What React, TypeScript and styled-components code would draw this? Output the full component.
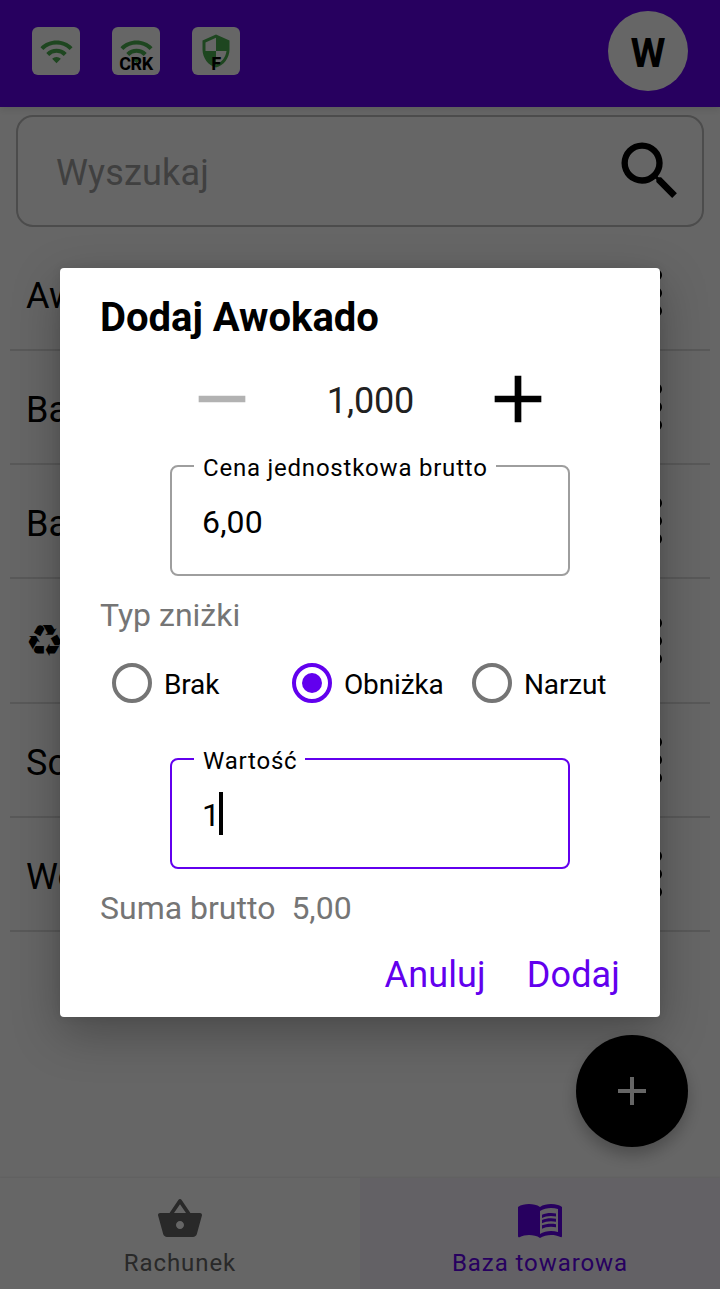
import React from "react";
import styled, { createGlobalStyle, css } from "styled-components";
import {
  MdAdd,
  MdMenuBook,
  MdMoreVert,
  MdRemove,
  MdSearch,
  MdSecurity,
  MdShoppingBasket,
  MdWifi,
} from "react-icons/md";

const PURPLE = "#6200ee";

const GlobalStyle = createGlobalStyle`
  * { box-sizing: border-box; }
  body {
    margin: 0;
    font-family: Roboto, "Liberation Sans", sans-serif;
    color: #000;
    background: #fff;
  }
  svg { display: block; flex-shrink: 0; }
`;

const Screen = styled.div`
  position: relative;
  display: flex;
  flex-direction: column;
  width: 720px;
  height: 1289px;
  overflow: hidden;
  background: #fff;
`;

const TopBar = styled.header`
  display: flex;
  align-items: center;
  gap: 32px;
  height: 107px;
  padding: 0 32px 5px;
  background: ${PURPLE};
  box-shadow: 0 2px 8px rgba(0, 0, 0, 0.12);
`;

const StatusTile = styled.div`
  position: relative;
  display: flex;
  align-items: center;
  justify-content: center;
  width: 48px;
  height: 48px;
  border-radius: 6px;
  background: #fff;
  color: #4caf50;
`;

const StatusTag = styled.span`
  position: absolute;
  left: 0;
  right: 0;
  bottom: 0;
  text-align: center;
  font-size: 18px;
  line-height: 22px;
  font-weight: 700;
  letter-spacing: -0.4px;
  color: #000;
`;

const Avatar = styled.div`
  display: flex;
  align-items: center;
  justify-content: center;
  width: 80px;
  height: 80px;
  margin-left: auto;
  border-radius: 50%;
  background: #fff;
  font-size: 40px;
  line-height: 48px;
  padding-top: 5px;
  font-weight: 700;
`;

const SearchBox = styled.div`
  display: flex;
  align-items: center;
  justify-content: space-between;
  height: 112px;
  margin: 8px 16px 10px;
  padding: 0 14px 0 38px;
  border: 2px solid #bdbdbd;
  border-radius: 17px;
`;

const Placeholder = styled.span`
  padding-top: 3px;
  font-size: 36px;
  line-height: 44px;
  letter-spacing: 0.15px;
  color: #a0a0a0;
`;

const ProductList = styled.ul`
  flex: 1;
  margin: 0;
  padding: 0 10px;
  list-style: none;
`;

const ProductRow = styled.li<{ $tall?: boolean }>`
  display: flex;
  align-items: center;
  justify-content: space-between;
  height: ${(p) => (p.$tall ? 125 : 114)}px;
  padding: 0 18px 0 16px;
  border-bottom: 2px solid #dedede;
  font-size: 36px;
  line-height: 42px;
`;

const ProductName = styled.span`
  padding-top: 6px;
`;

const RecycleMark = styled.span`
  display: block;
  margin: -6px 0 0 -1px;
  font-family: "DejaVu Sans", sans-serif;
  font-size: 44px;
  line-height: 42px;
`;

const BottomNav = styled.nav`
  display: flex;
  height: 111px;
  box-shadow: 0 -1px 2px rgba(0, 0, 0, 0.08);
`;

const NavTab = styled.div<{ $active?: boolean }>`
  flex: 1;
  display: flex;
  flex-direction: column;
  align-items: center;
  padding-top: 17px;
  font-size: 24px;
  line-height: 28px;
  letter-spacing: 0.93px;
  color: ${(p) => (p.$active ? PURPLE : "#666")};
  background: ${(p) => (p.$active ? "#f7f2fd" : "#fff")};
  gap: 6px;
`;

const Fab = styled.div`
  position: absolute;
  right: 32px;
  bottom: 142px;
  display: flex;
  align-items: center;
  justify-content: center;
  width: 112px;
  height: 112px;
  border-radius: 50%;
  background: #000;
  color: #fff;
  box-shadow: 0 8px 16px rgba(0, 0, 0, 0.26);
`;

const Scrim = styled.div`
  position: absolute;
  inset: 0;
  display: flex;
  justify-content: center;
  align-items: flex-start;
  padding-top: 268px;
  background: rgba(0, 0, 0, 0.6);
`;

const Dialog = styled.section`
  display: flex;
  flex-direction: column;
  width: 600px;
  height: 749px;
  padding: 0 40px;
  border-radius: 4px;
  background: #fff;
  box-shadow: 0 16px 48px rgba(0, 0, 0, 0.28), 0 0 10px rgba(0, 0, 0, 0.08);
`;

const Title = styled.h1`
  margin: 26px 0 0;
  font-size: 40px;
  line-height: 48px;
  font-weight: 700;
`;

const Stepper = styled.div`
  display: flex;
  align-items: center;
  justify-content: space-between;
  height: 80px;
  margin: 17px 62px 0 82px;
`;

const StepButton = styled.span<{ $disabled?: boolean }>`
  color: ${(p) => (p.$disabled ? "#b2b2b2" : "#000")};
`;

const Quantity = styled.span`
  padding: 3px 0 0 1px;
  font-size: 36px;
  line-height: 42px;
  letter-spacing: -0.15px;
  color: #212121;
`;

const Field = styled.fieldset<{ $focused?: boolean }>`
  width: 400px;
  height: 126px;
  margin: 0 0 0 70px;
  padding: 0 30px;
  border: 2px solid ${(p) => (p.$focused ? PURPLE : "#9e9e9e")};
  border-radius: 8px;
`;

const FieldLabel = styled.legend`
  margin-left: -8px;
  padding: 4px 8px 0 9px;
  font-size: 24px;
  line-height: 28px;
  letter-spacing: 0.78px;
`;

const FieldValue = styled.div`
  display: flex;
  align-items: center;
  height: 56px;
  margin-top: 12px;
  font-size: 32px;
  letter-spacing: 0.15px;
`;

const Caret = styled.span`
  width: 4px;
  height: 43px;
  margin: 0 0 4px -1px;
  background: #000;
`;

const Caption = styled.p`
  margin: 0;
  font-size: 32px;
  line-height: 38px;
  color: #757575;
`;

const RadioRow = styled.div`
  display: grid;
  grid-template-columns: repeat(3, 180px);
  height: 40px;
  padding-left: 12px;
`;

const RadioOption = styled.label`
  display: flex;
  align-items: center;
  gap: 12px;
  font-size: 28px;
  line-height: 32px;
`;

const RadioMark = styled.span<{ $checked?: boolean }>`
  width: 40px;
  height: 40px;
  border: 4px solid ${(p) => (p.$checked ? PURPLE : "#757575")};
  border-radius: 50%;
  ${(p) =>
    p.$checked &&
    css`
      padding: 6px;
      background: ${PURPLE} content-box;
    `}
`;

const RadioText = styled.span`
  padding-top: 3px;
  letter-spacing: -0.15px;
`;

const Actions = styled.div`
  display: flex;
  justify-content: flex-end;
  gap: 41px;
  margin-top: 27px;
`;

const ActionButton = styled.button`
  padding: 0;
  border: 0;
  background: none;
  font: 400 36px/42px Roboto, sans-serif;
  letter-spacing: 0.12px;
  color: ${PURPLE};
`;

const PriceArea = styled.div`
  margin-top: 11px;
`;
const TypeArea = styled.div`
  margin-top: 20px;
`;
const RadioArea = styled.div`
  margin-top: 29px;
`;
const ValueArea = styled.div`
  margin-top: 40px;
`;
const SumArea = styled.div`
  display: flex;
  gap: 16px;
  margin-top: 20px;
`;

const products = [
  { name: "Awokado" },
  { name: "Banany" },
  { name: "Batony" },
  { name: "♻", recycled: true },
  { name: "Sok" },
  { name: "Woda" },
];

const discountTypes = ["Brak", "Obniżka", "Narzut"];

export default function App() {
  return (
    <>
      <GlobalStyle />
      <Screen>
        <TopBar>
          <StatusTile>
            <MdWifi size={35} />
          </StatusTile>
          <StatusTile>
            <MdWifi size={35} />
            <StatusTag>CRK</StatusTag>
          </StatusTile>
          <StatusTile>
            <MdSecurity size={36} />
            <StatusTag>F</StatusTag>
          </StatusTile>
          <Avatar>W</Avatar>
        </TopBar>
        <SearchBox>
          <Placeholder>Wyszukaj</Placeholder>
          <MdSearch size={76} />
        </SearchBox>
        <ProductList>
          {products.map((p) => (
            <ProductRow key={p.name} $tall={p.recycled}>
              <ProductName>
                {p.recycled ? <RecycleMark>{p.name}</RecycleMark> : p.name}
              </ProductName>
              <MdMoreVert size={72} />
            </ProductRow>
          ))}
        </ProductList>
        <BottomNav>
          <NavTab>
            <MdShoppingBasket size={48} />
            Rachunek
          </NavTab>
          <NavTab $active>
            <MdMenuBook size={48} />
            Baza towarowa
          </NavTab>
        </BottomNav>
        <Fab>
          <MdAdd size={48} />
        </Fab>
        <Scrim>
          <Dialog>
            <Title>Dodaj Awokado</Title>
            <Stepper>
              <StepButton $disabled>
                <MdRemove size={80} />
              </StepButton>
              <Quantity>1,000</Quantity>
              <StepButton>
                <MdAdd size={80} />
              </StepButton>
            </Stepper>
            <PriceArea>
              <Field>
                <FieldLabel>Cena jednostkowa brutto</FieldLabel>
                <FieldValue>6,00</FieldValue>
              </Field>
            </PriceArea>
            <TypeArea>
              <Caption>Typ zniżki</Caption>
            </TypeArea>
            <RadioArea>
              <RadioRow>
                {discountTypes.map((t) => (
                  <RadioOption key={t}>
                    <RadioMark $checked={t === "Obniżka"} />
                    <RadioText>{t}</RadioText>
                  </RadioOption>
                ))}
              </RadioRow>
            </RadioArea>
            <ValueArea>
              <Field $focused>
                <FieldLabel>Wartość</FieldLabel>
                <FieldValue>
                  1<Caret />
                </FieldValue>
              </Field>
            </ValueArea>
            <SumArea>
              <Caption>Suma brutto</Caption>
              <Caption>5,00</Caption>
            </SumArea>
            <Actions>
              <ActionButton>Anuluj</ActionButton>
              <ActionButton>Dodaj</ActionButton>
            </Actions>
          </Dialog>
        </Scrim>
      </Screen>
    </>
  );
}
